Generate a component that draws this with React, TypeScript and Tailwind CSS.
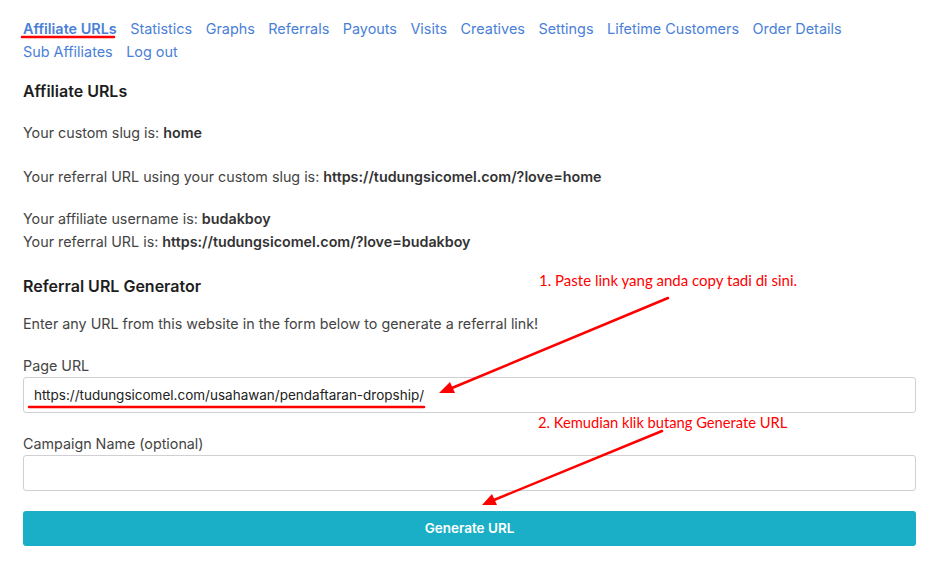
const navItems = [
  'Affiliate URLs',
  'Statistics',
  'Graphs',
  'Referrals',
  'Payouts',
  'Visits',
  'Creatives',
  'Settings',
  'Lifetime Customers',
  'Order Details',
  'Sub Affiliates',
  'Log out',
]

export default function App() {
  return (
    <div className="relative w-[932px] h-[563px] overflow-hidden bg-white font-['Inter',sans-serif] text-[14.3px] text-[#444]">
      <div className="pl-[23px] pr-[16px] pt-[17px]">
        {/* タブ */}
        <div className="flex flex-wrap gap-x-[13.5px] leading-[23px] text-[14.4px] text-[#4a7fd8]">
          {navItems.map((item, i) => (
            <a key={item} className={i === 0 ? 'font-semibold' : ''}>
              {item}
            </a>
          ))}
        </div>

        <h2 className="mt-[16px] text-[16px] font-semibold text-[#1d1d1d] leading-[24px]">Affiliate URLs</h2>

        <p className="mt-[19px] leading-[22px]">
          Your custom slug is: <strong className="font-semibold text-[#333]">home</strong>
        </p>
        <p className="mt-[22px] leading-[22px]">
          Your referral URL using your custom slug is:{' '}
          <strong className="font-semibold text-[#333]">https://tudungsicomel.com/?love=home</strong>
        </p>
        <p className="mt-[19px] leading-[23px]">
          Your affiliate username is: <strong className="font-semibold text-[#333]">budakboy</strong>
          <br />
          Your referral URL is: <strong className="font-semibold text-[#333]">https://tudungsicomel.com/?love=budakboy</strong>
        </p>

        <h2 className="mt-[21px] text-[16px] font-semibold text-[#1d1d1d] leading-[24px]">Referral URL Generator</h2>

        <p className="mt-[15px] leading-[22px]">Enter any URL from this website in the form below to generate a referral link!</p>

        {/* フォーム */}
        <label className="block mt-[20px] leading-[22px]">Page URL</label>
        <div className="mt-0 h-[36px] border border-[#cfcfd4] rounded-[3px] flex items-center px-[10px] text-[13.5px] text-[#222]">
          https://tudungsicomel.com/usahawan/pendaftaran-dropship/
        </div>

        <label className="block mt-[20px] leading-[22px]">Campaign Name (optional)</label>
        <div className="mt-0 h-[36px] border border-[#cfcfd4] rounded-[3px]" />

        <button className="mt-[20px] w-full h-[35px] rounded-[3px] bg-[#1aafc7] text-white font-semibold text-[13.5px]">
          Generate URL
        </button>
      </div>

      {/* 注釈 */}
      <div className="absolute left-[539px] top-[270px] leading-[20px] font-['Lato',sans-serif] text-[15px] text-[#ff0000]">
        1. Paste link yang anda copy tadi di sini.
      </div>
      <div className="absolute left-[538px] top-[412px] leading-[20px] font-['Lato',sans-serif] text-[14.7px] text-[#ff0000]">
        2. Kemudian klik butang Generate URL
      </div>
      <svg className="absolute left-0 top-0 pointer-events-none" width="932" height="563">
        <line x1="22" y1="37" x2="114" y2="37" stroke="#ff0000" strokeWidth="2.5" strokeLinecap="round" />
        <line x1="29" y1="407" x2="424" y2="407" stroke="#ff0000" strokeWidth="2.5" strokeLinecap="round" />
        <line x1="668" y1="298" x2="452" y2="388" stroke="#ff0000" strokeWidth="2.5" strokeLinecap="round" />
        <polygon points="439,393 450,382 455,393" fill="#ff0000" />
        <line x1="662" y1="431" x2="494" y2="500" stroke="#ff0000" strokeWidth="2.5" strokeLinecap="round" />
        <polygon points="482,505 492,494 497,505" fill="#ff0000" />
      </svg>
    </div>
  )
}
